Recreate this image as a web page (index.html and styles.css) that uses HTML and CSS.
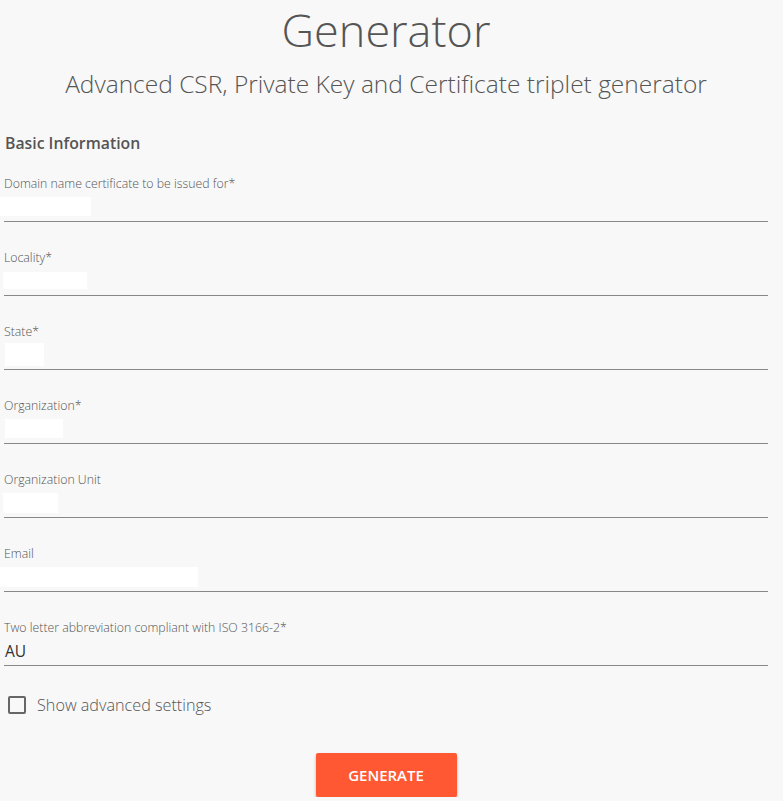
FILE: index.html
```html
<!DOCTYPE html>
<html lang="en">
<head>
<meta charset="utf-8">
<title>Generator</title>
<link rel="stylesheet" href="styles.css">
</head>
<body>
<main class="page">
  <h1 class="title">Generator</h1>
  <p class="subtitle">Advanced CSR, Private Key and Certificate triplet generator</p>
  <h2 class="section">Basic Information</h2>
  <form class="form">
    <div class="field">
      <label class="label">Domain name certificate to be issued for*</label>
      <div class="input"><span class="fill" style="width:91px;height:19px;margin-left:-4px"></span></div>
    </div>
    <div class="field">
      <label class="label">Locality*</label>
      <div class="input"><span class="fill" style="width:84px;height:17px;margin-left:-1px"></span></div>
    </div>
    <div class="field">
      <label class="label">State*</label>
      <div class="input"><span class="fill" style="width:39px;height:23px;margin-left:1px"></span></div>
    </div>
    <div class="field">
      <label class="label">Organization*</label>
      <div class="input"><span class="fill" style="width:58px;height:19px;margin-left:1px"></span></div>
    </div>
    <div class="field">
      <label class="label">Organization Unit</label>
      <div class="input"><span class="fill" style="width:55px;height:20px;margin-left:-1px"></span></div>
    </div>
    <div class="field">
      <label class="label">Email</label>
      <div class="input"><span class="fill" style="width:198px;height:20px;margin-left:-4px"></span></div>
    </div>
    <div class="field">
      <label class="label">Two letter abbreviation compliant with ISO 3166-2*</label>
      <div class="input"><span class="value">AU</span></div>
    </div>
    <label class="check">
      <span class="box"></span>
      <span class="check-text">Show advanced settings</span>
    </label>
    <div class="actions">
      <button type="button" class="btn">GENERATE</button>
    </div>
  </form>
</main>
</body>
</html>
```

FILE: styles.css
```css
html, body {
  margin: 0;
  padding: 0;
  background: #f8f8f8;
}
body {
  font-family: "Open Sans", "Lato", sans-serif;
  color: #555;
}
.page {
  padding: 0 15px 0 4px;
}
.title {
  margin: 0;
  padding-top: 2px;
  text-align: center;
  font-weight: 300;
  font-size: 45px;
  line-height: 56px;
  color: #555;
}
.subtitle {
  margin: 11px 0 0;
  text-align: center;
  font-weight: 300;
  font-size: 24.5px;
  line-height: 30px;
  color: #555;
}
.section {
  margin: 34px 0 0 1px;
  font-size: 15.8px;
  font-weight: 600;
  line-height: 20px;
  color: #555;
}
.form {
  display: flex;
  flex-direction: column;
}
.field {
  margin-top: 23px;
  border-bottom: 1px solid #888;
}
.field + .field {
  margin-top: 28px;
}
.label {
  display: block;
  font-size: 12.3px;
  line-height: 16px;
  font-weight: 300;
  color: #555;
}
.input {
  height: 29px;
  display: flex;
  align-items: center;
}
.fill {
  display: block;
  background: #fff;
}
.value {
  font-size: 15.5px;
  color: #333;
  padding-left: 1px;
}
.check {
  display: flex;
  align-items: center;
  gap: 11px;
  margin: 28px 0 0 4px;
}
.box {
  width: 14px;
  height: 14px;
  border: 2px solid #666;
  border-radius: 2px;
}
.check-text {
  font-size: 16.2px;
  font-weight: 300;
  color: #555;
}
.actions {
  display: flex;
  justify-content: center;
  margin-top: 37px;
}
.btn {
  width: 141px;
  height: 44px;
  border: 0;
  border-radius: 2px;
  background: #ff5833;
  color: #fff;
  font-family: "Open Sans", "Lato", sans-serif;
  font-weight: 600;
  font-size: 15px;
  box-shadow: 0 2px 3px rgba(0,0,0,0.3);
}
```
